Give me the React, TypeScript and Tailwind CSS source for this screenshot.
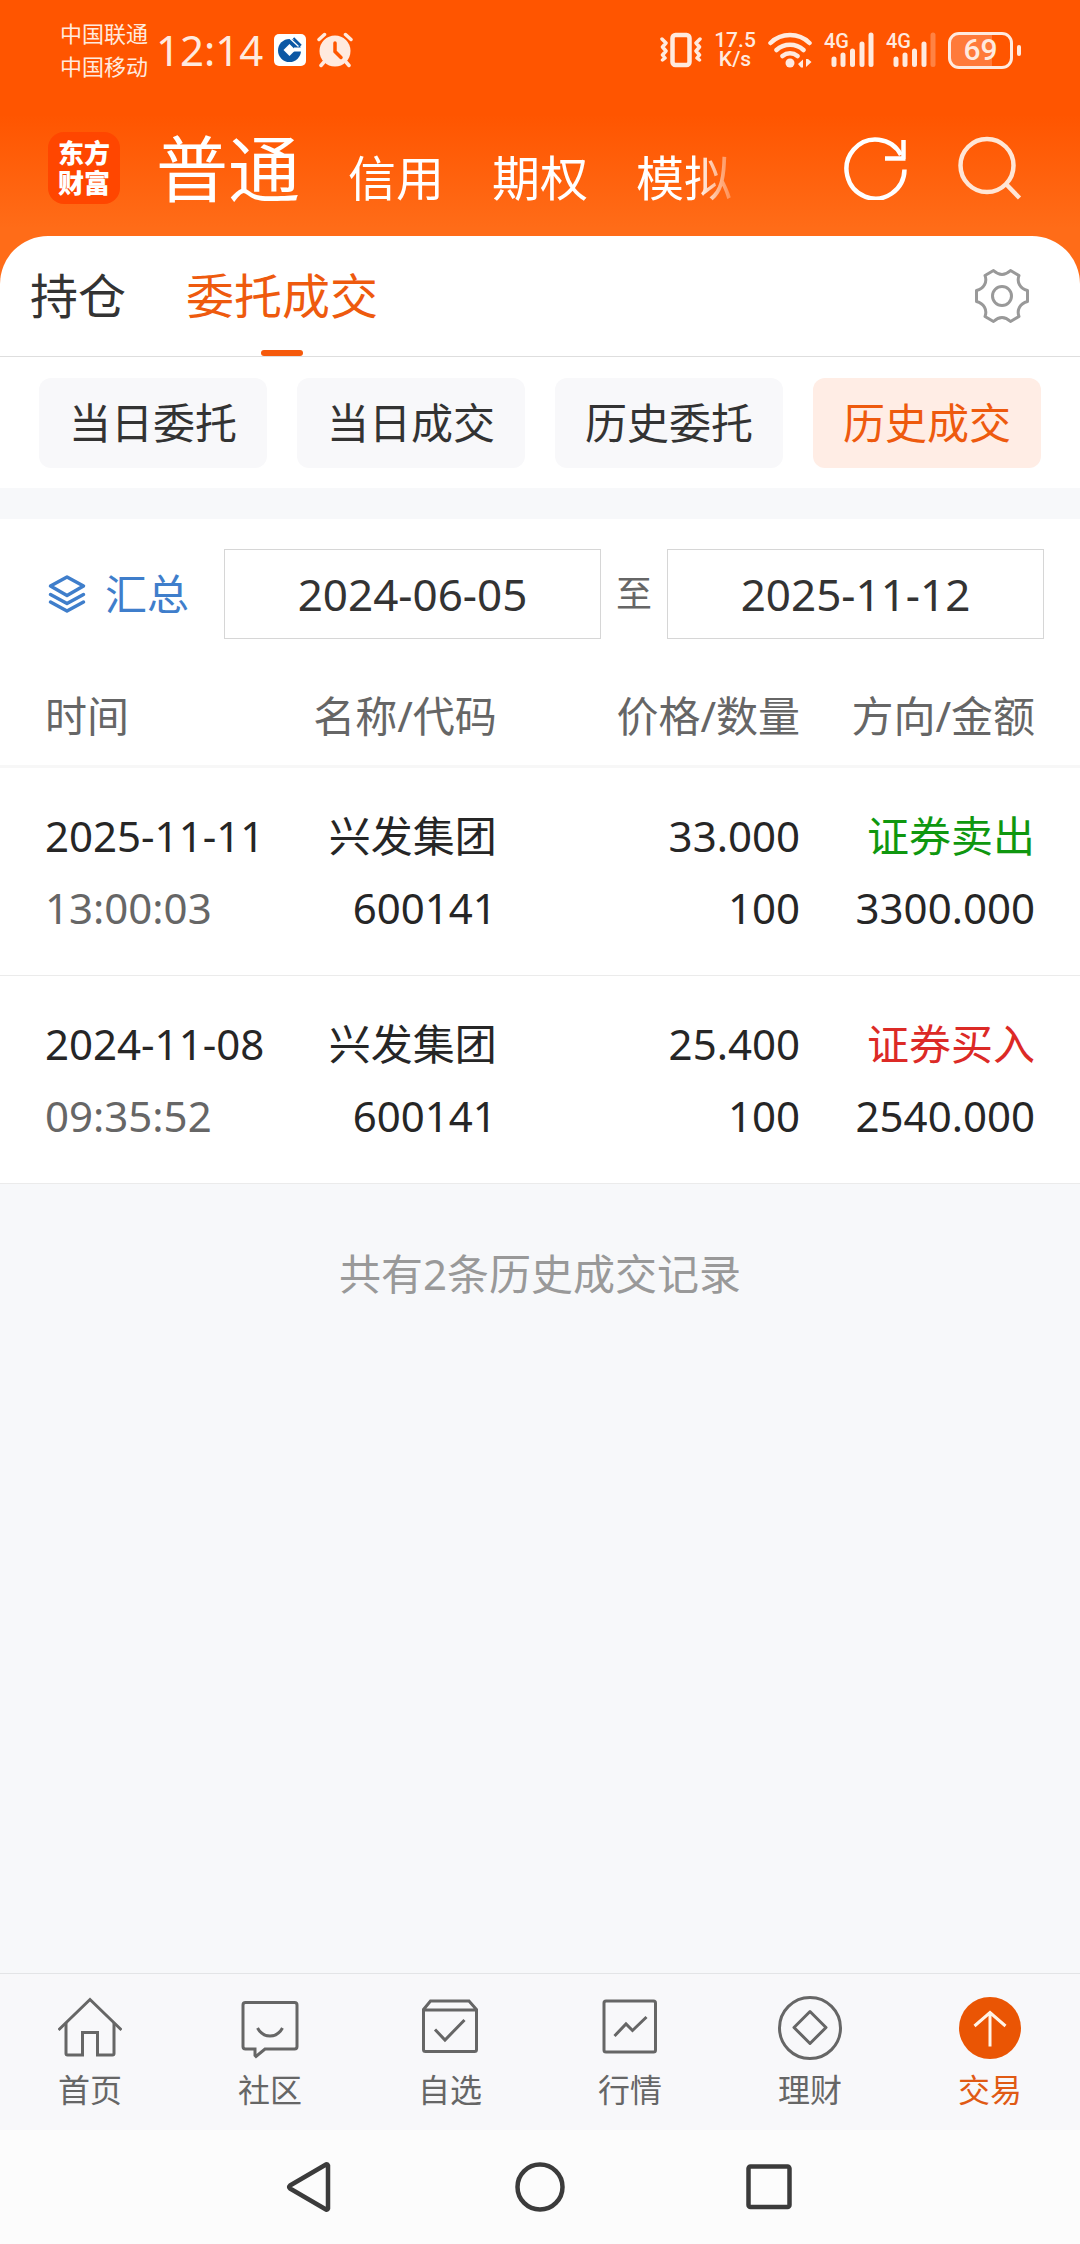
import { ReactNode, useState } from "react";

const accountTypes = ["普通", "信用", "期权", "模拟"];
const filters = ["当日委托", "当日成交", "历史委托", "历史成交"];

const records = [
  {
    date: "2025-11-11",
    time: "13:00:03",
    name: "兴发集团",
    code: "600141",
    price: "33.000",
    volume: "100",
    side: "sell",
    amount: "3300.000",
  },
  {
    date: "2024-11-08",
    time: "09:35:52",
    name: "兴发集团",
    code: "600141",
    price: "25.400",
    volume: "100",
    side: "buy",
    amount: "2540.000",
  },
];

function SignalIcon({ weak = false }: { weak?: boolean }) {
  return (
    <svg
      className="overflow-visible"
      width="50"
      height="36"
      viewBox="0 0 50 36"
      fill="none"
      stroke="currentColor"
      strokeWidth="5"
      strokeLinecap="round"
    >
      <text x="0" y="16" fontSize="20" fontWeight="500" fontFamily="Roboto, sans-serif" fill="currentColor" stroke="none">
        4G
      </text>
      <path d="M10 27v5.500M19 23v9.500M28.500 19v13.500M38 12v20.500" />
      <path d="M47 3v29.500" opacity={weak ? 0.3 : 1} />
    </svg>
  );
}

function StatusBar() {
  return (
    <div className="flex h-[100px] items-center justify-between pl-[60px] pr-[59px] text-[#ffeadf]">
      <div className="flex items-center gap-[11px]">
        <div className="flex items-center gap-2">
          <div className="text-[22px] leading-[33px]">
            <div>中国联通</div>
            <div>中国移动</div>
          </div>
          <span className="text-[42px] leading-none">12:14</span>
        </div>
        <svg width="32" height="32" viewBox="0 0 32 32">
          <rect width="32" height="32" rx="5" fill="#fff" />
          <circle cx="15.500" cy="16.500" r="11.500" fill="#0b57a4" />
          <path d="M15.500 10l6 6-6 6-6-6z" fill="#fff" />
          <path d="M19 17.500h9.500v-4H20z" fill="#fff" />
          <path d="M16 4.500l8.500 8" stroke="#fff" strokeWidth="1.250" />
          <path d="M19.500 4l7.500 7.500" stroke="#0b57a4" strokeWidth="2" />
        </svg>
        <svg width="36" height="36" viewBox="0 0 36 36" fill="none" stroke="currentColor" strokeWidth="3.500" strokeLinecap="round">
          <circle cx="18" cy="19" r="15.500" fill="currentColor" stroke="none" />
          <path d="M2 7.500 7.500 2.500M34 7.500l-5.500-5M7 30l-3 3.500M29 30l3 3.500" />
          <path d="M18 11v8.500l6 6" stroke="#ff5600" />
        </svg>
      </div>

      <div className="flex items-center gap-3">
        <svg width="42" height="36" viewBox="0 0 42 36" fill="none" stroke="currentColor" strokeLinecap="round" strokeLinejoin="round">
          <rect x="12.500" y="3" width="17" height="30" rx="3" strokeWidth="4.500" />
          <path d="M2 7l4 4-3.500 4L6 19l-3.500 4L5 26l-2.500 2M40 7l-4 4 3.500 4L36 19l3.500 4-2.500 3 2.500 2" strokeWidth="3.500" />
        </svg>
        <div className="w-[42px] text-center font-[Roboto] text-[21px] font-medium leading-[19px]">17.5 K/s</div>
        <svg width="44" height="36" viewBox="0 0 44 36" fill="none" stroke="currentColor" strokeWidth="4.500" strokeLinecap="round">
          <path d="M2.500 11a28 28 0 0 1 39 0M8.500 18a20 20 0 0 1 27 0M14.500 24a12 12 0 0 1 15 0" />
          <circle cx="22" cy="31" r="4.500" fill="currentColor" stroke="none" />
          <path d="M30 32l5-4.500v8h-2zM43.500 30l-5.500 5v-8h2z" fill="currentColor" stroke="none" />
        </svg>
        <SignalIcon />
        <SignalIcon weak />
        <div className="flex items-center gap-1">
          <div className="flex h-[37px] w-[65px] items-center justify-center rounded-[11px] border-[3px] border-current bg-[linear-gradient(90deg,#ff7a3a_69%,transparent_69%)] font-[Roboto] text-[30px] font-medium leading-none">
            69
          </div>
          <div className="h-[11px] w-1 rounded-full bg-current" />
        </div>
      </div>
    </div>
  );
}

function Header() {
  return (
    <header className="flex h-[136px] items-center pl-12 pr-[58px] text-white">
      <div className="flex h-[72px] w-[72px] shrink-0 items-center justify-center rounded-2xl bg-[#ff4600]">
        <span className="w-[52px] text-[26px] font-black leading-[30px]">东方财富</span>
      </div>
      <nav className="ml-9 flex items-baseline gap-12 pr-6 [mask-image:linear-gradient(90deg,#000_90%,transparent_98%)]">
        {accountTypes.map((type, i) => (
          <button
            key={type}
            className={i === 0 ? "shrink-0 text-[72px] leading-[80px]" : "shrink-0 text-[48px] leading-[56px]"}
          >
            {type}
          </button>
        ))}
      </nav>
      <div className="ml-auto flex gap-[50px]">
        <button aria-label="刷新">
          <svg width="64" height="64" viewBox="0 0 64 64" fill="none" stroke="currentColor" strokeWidth="4.500">
            <path d="M60.500 33.500A29 29.500 0 1 1 57 19" />
            <path d="M59.500 4v19M41 22.500h20.500" />
          </svg>
        </button>
        <button aria-label="搜索" className="text-[#ffe6d6]">
          <svg width="64" height="64" viewBox="0 0 64 64" fill="none" stroke="currentColor" strokeWidth="4.500">
            <circle cx="29" cy="29.500" r="26.500" />
            <path d="M48 48l13.500 14" />
          </svg>
        </button>
      </div>
    </header>
  );
}

function Tabs() {
  return (
    <div className="flex h-[121px] items-center justify-between rounded-t-[48px] border-b border-[#dedede] bg-white pl-[30px] pr-[50px]">
      <div className="flex h-full gap-[60px] text-[48px]">
        <button className="text-[#333]">持仓</button>
        <button className="relative text-[#ee5a0e]">
          委托成交
          <span className="absolute bottom-0 left-1/2 h-1.5 w-[42px] -translate-x-1/2 rounded-full bg-[#f65a0c]" />
        </button>
      </div>
      <button aria-label="设置" className="text-[#999]">
        <svg width="56" height="56" viewBox="0 0 56 56" fill="none" stroke="currentColor" strokeWidth="3" strokeLinejoin="round">
          <path d="M19.500 2.500Q28 10.500 36.500 2.500L45 7.500C42.500 14 46 20.500 53.500 22.500V33.500C46 35.500 42.500 42 45 48.500L36.500 53.500Q28 45.500 19.500 53.500L11 48.500C13.500 42 10 35.500 2.500 33.500V22.500C10 20.500 13.500 14 11 7.500Z" />
          <circle cx="28" cy="28" r="9.500" />
        </svg>
      </button>
    </div>
  );
}

function Filters() {
  const [active, setActive] = useState("历史成交");

  return (
    <div className="grid grid-cols-4 gap-[30px] bg-white px-[39px] pb-5 pt-[21px]">
      {filters.map((filter) => (
        <button
          key={filter}
          onClick={() => setActive(filter)}
          className={
            filter === active
              ? "h-[90px] rounded-xl bg-[#ffede5] text-[#ee5a0e]"
              : "h-[90px] rounded-xl bg-[#f8f8fa] text-[#333]"
          }
        >
          {filter}
        </button>
      ))}
    </div>
  );
}

function DateRange() {
  return (
    <div className="flex items-center bg-white pb-[26px] pl-[47px] pr-9 pt-[30px]">
      <button className="mr-[35px] flex shrink-0 items-center gap-[18px] text-[#3f7ecb]">
        <svg width="40" height="40" viewBox="0 0 40 40" fill="none" stroke="currentColor" strokeWidth="3.500" strokeLinejoin="round" strokeLinecap="round">
          <path d="M20 3l16.500 9L20 21.500 3.500 12z" />
          <path d="M3.500 20.500 20 29.500l16.500-9M3.500 28 20 37l16.500-9" />
        </svg>
        汇总
      </button>
      <input
        aria-label="开始日期"
        readOnly
        value="2024-06-05"
        className="h-[90px] min-w-0 flex-1 border border-[#d6d6d6] bg-white text-center text-[44px] text-[#333]"
      />
      <span className="mx-[15px] text-[36px] text-[#666]">至</span>
      <input
        aria-label="结束日期"
        readOnly
        value="2025-11-12"
        className="h-[90px] min-w-0 flex-1 border border-[#d6d6d6] bg-white text-center text-[44px] text-[#333]"
      />
    </div>
  );
}

function RecordTable() {
  return (
    <table className="w-full table-fixed border-separate border-spacing-0 whitespace-nowrap bg-white text-right text-[#262626]">
      <colgroup>
        <col className="w-[26%]" />
        <col className="w-[20%]" />
        <col />
        <col className="w-[280px]" />
      </colgroup>
      <thead className="leading-[60px] text-[#666]">
        <tr className="*:border-b-[3px] *:border-[#f7f7f7] *:pb-[19px] *:pt-[21px] *:font-normal">
          <th className="pl-[45px] text-left">时间</th>
          <th>名称/代码</th>
          <th>价格/数量</th>
          <th className="pr-[45px]">方向/金额</th>
        </tr>
      </thead>
      <tbody className="leading-[72px]">
        {records.map((r) => (
          <tr key={r.date} className="*:border-b *:border-[#ebebeb] *:pb-[31px] *:pt-8">
            <td className="pl-[45px] text-left">
              <div>{r.date}</div>
              <div className="text-[#666]">{r.time}</div>
            </td>
            <td>
              <div>{r.name}</div>
              <div>{r.code}</div>
            </td>
            <td>
              <div>{r.price}</div>
              <div>{r.volume}</div>
            </td>
            <td className="pr-[45px]">
              {r.side === "sell" ? (
                <div className="text-[#0f970f]">证券卖出</div>
              ) : (
                <div className="text-[#dc2a26]">证券买入</div>
              )}
              <div>{r.amount}</div>
            </td>
          </tr>
        ))}
      </tbody>
    </table>
  );
}

function TabItem({ label, active = false, children }: { label: string; active?: boolean; children: ReactNode }) {
  return (
    <a
      href="#"
      className={
        active
          ? "flex flex-col items-center gap-2.5 text-[#e05a14]"
          : "flex flex-col items-center gap-2.5 text-[#666]"
      }
    >
      <svg width="64" height="64" viewBox="0 0 64 64" fill="none" stroke="currentColor" strokeWidth="3">
        {children}
      </svg>
      <span className="text-[32px] leading-[40px]">{label}</span>
    </a>
  );
}

function TabBar() {
  return (
    <nav className="grid grid-cols-6 border-t border-[#e3e4e6] bg-[#f8f8fa] pb-5 pt-[22px]">
      <TabItem label="首页">
        <path d="M.500 34 32 3.500 63.500 34" />
        <path d="M8 27v30.500q0 1.500 1.500 1.500H24.500V36.500h15V59H54.500q1.500 0 1.500-1.500V27" />
      </TabItem>
      <TabItem label="社区">
        <path d="M7.500 6.500h49q2.500 0 2.500 2.500v41.500q0 2.500-2.500 2.500H27L18 60.500 17 59.500V53H7.500Q5 53 5 50.500V9q0-2.500 2.500-2.500z" />
        <path d="M19.500 32q4.500 8 12.500 8t12.500-8" />
      </TabItem>
      <TabItem label="自选">
        <path d="M5.500 13.500 12.500 5h38.500l7.500 8.500v40q0 2-2 2H7.500q-2 0-2-2zM5.500 14h53" />
        <path d="M17 33.500 27 44l19.500-20" />
      </TabItem>
      <TabItem label="行情">
        <rect x="6" y="5" width="51.500" height="51" rx="2" />
        <path d="M16.500 40 28 28l6.500 6.500L48.500 21" />
      </TabItem>
      <TabItem label="理财">
        <circle cx="32" cy="32" r="30.500" />
        <path d="M32 15.500l16 16-16 16-16-16z" strokeLinejoin="round" />
      </TabItem>
      <TabItem label="交易" active>
        <circle cx="32" cy="32" r="31" fill="#ea5504" stroke="none" />
        <path d="M16.500 30 32 16.500 47.500 30M32 17v33.500" stroke="#fff4e8" strokeWidth="3" />
      </TabItem>
    </nav>
  );
}

function SystemNav() {
  return (
    <div className="flex h-[114px] items-center justify-center gap-[180px] bg-[#fcfcfc] text-[#3b3b3b]">
      <button aria-label="返回">
        <svg width="50" height="50" viewBox="0 0 50 50" fill="none" stroke="currentColor" strokeWidth="4.500" strokeLinejoin="round">
          <path d="M43 3.500v43q-.500 1.500-2 1L5 26.500q-1.500-1.500 0-3L41 2.500q1.500-.500 2 1z" />
        </svg>
      </button>
      <button aria-label="主屏幕">
        <svg width="50" height="50" viewBox="0 0 50 50" fill="none" stroke="currentColor" strokeWidth="4.500">
          <circle cx="25" cy="25" r="22.500" />
        </svg>
      </button>
      <button aria-label="最近任务">
        <svg width="50" height="50" viewBox="0 0 50 50" fill="none" stroke="currentColor" strokeWidth="4.500">
          <rect x="3.500" y="4.500" width="41" height="40.500" rx="2" />
        </svg>
      </button>
    </div>
  );
}

export default function App() {
  return (
    <div className="flex min-h-screen flex-col bg-[#f7f8fa] font-['Noto_Sans','Noto_Sans_CJK_SC',sans-serif] text-[42px] leading-[60px]">
      <div className="bg-[linear-gradient(180deg,#ff5500_32%,#ff6c18_64%,#ff6c18)]">
        <StatusBar />
        <Header />
        <Tabs />
      </div>
      <main className="flex-1">
        <Filters />
        <div className="h-[31px]" />
        <DateRange />
        <RecordTable />
        <p className="pt-[60px] text-center text-[#999]">共有2条历史成交记录</p>
      </main>
      <TabBar />
      <SystemNav />
    </div>
  );
}
